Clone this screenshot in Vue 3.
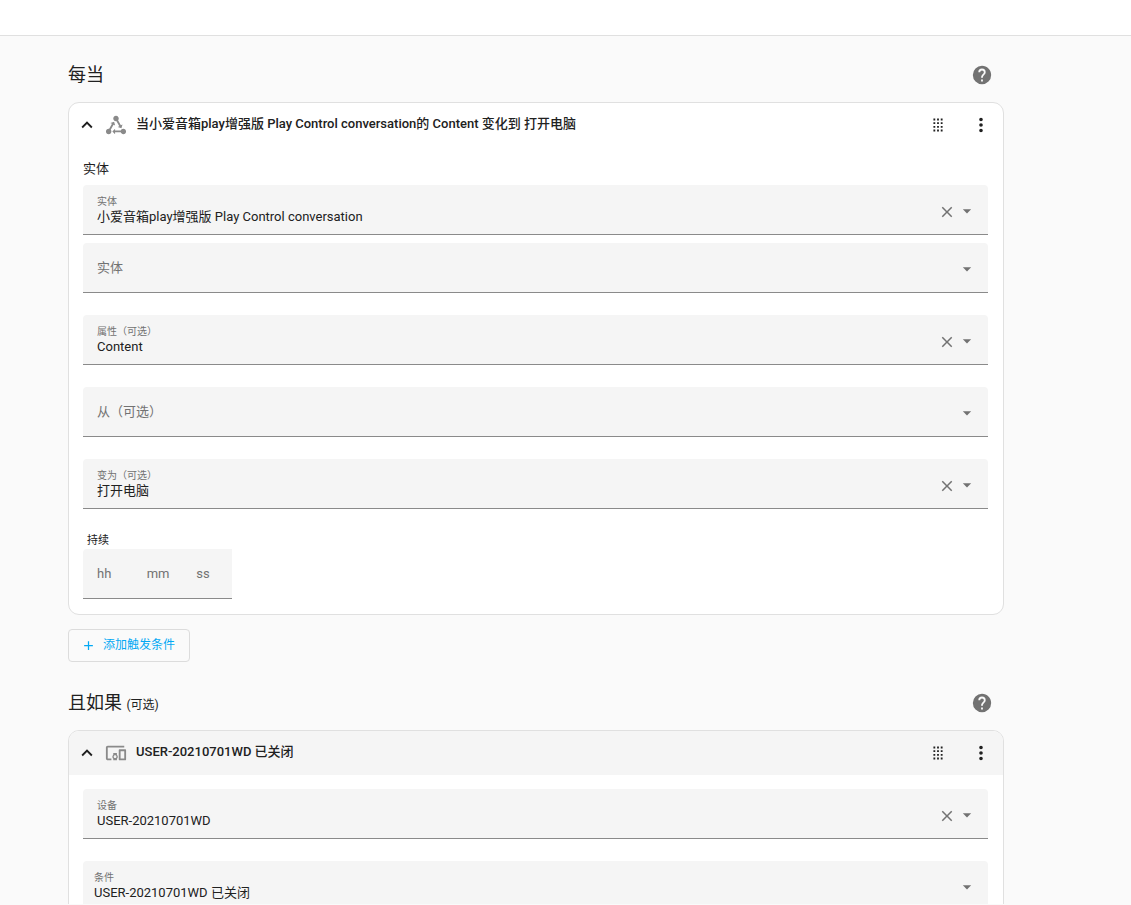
<script setup>
import { reactive } from 'vue'

const icons = {
  up: 'M7.41,15.41L12,10.83L16.59,15.41L18,14L12,8L6,14L7.41,15.41Z',
  state:
    'M6.27 17.05C6.72 17.58 7 18.25 7 19C7 20.66 5.66 22 4 22S1 20.66 1 19 2.34 16 4 16C4.18 16 4.36 16 4.53 16.05L7.6 10.69L5.86 9.7L9.95 8.58L11.07 12.67L9.33 11.68L6.27 17.05M20 16C18.7 16 17.6 16.84 17.18 18H11V16L8 19L11 22V20H17.18C17.6 21.16 18.7 22 20 22C21.66 22 23 20.66 23 19S21.66 16 20 16M12 8C12.18 8 12.36 8 12.53 7.95L15.6 13.31L13.86 14.3L17.95 15.42L19.07 11.33L17.33 12.32L14.27 6.95C14.72 6.42 15 5.75 15 5C15 3.34 13.66 2 12 2S9 3.34 9 5 10.34 8 12 8Z',
  devices:
    'M3 6H21V4H3C1.9 4 1 4.9 1 6V18C1 19.1 1.9 20 3 20H7V18H3V6M13 12H9V13.78C8.39 14.33 8 15.11 8 16C8 16.89 8.39 17.67 9 18.22V20H13V18.22C13.61 17.67 14 16.88 14 16S13.61 14.33 13 13.78V12M11 17.5C10.17 17.5 9.5 16.83 9.5 16S10.17 14.5 11 14.5 12.5 15.17 12.5 16 11.83 17.5 11 17.5M22 8H16C15.5 8 15 8.5 15 9V19C15 19.5 15.5 20 16 20H22C22.5 20 23 19.5 23 19V9C23 8.5 22.5 8 22 8M21 18H17V10H21V18Z',
  help: 'M15.07,11.25L14.17,12.17C13.45,12.89 13,13.5 13,15H11V14.5C11,13.39 11.45,12.39 12.17,11.67L13.41,10.41C13.78,10.05 14,9.55 14,9C14,7.89 13.1,7 12,7A2,2 0 0,0 10,9H8A4,4 0 0,1 12,5A4,4 0 0,1 16,9C16,9.88 15.64,10.67 15.07,11.25M13,19H11V17H13M12,2A10,10 0 0,0 2,12A10,10 0 0,0 12,22A10,10 0 0,0 22,12C22,6.47 17.5,2 12,2Z',
  grid: [6, 10, 14, 18].map((y) => [8, 12, 16].map((x) => `M${x - 1},${y - 1}h2v2h-2z`).join('')).join(''),
  dots: 'M12,16A2,2 0 0,1 14,18A2,2 0 0,1 12,20A2,2 0 0,1 10,18A2,2 0 0,1 12,16M12,10A2,2 0 0,1 14,12A2,2 0 0,1 12,14A2,2 0 0,1 10,12A2,2 0 0,1 12,10M12,4A2,2 0 0,1 14,6A2,2 0 0,1 12,8A2,2 0 0,1 10,6A2,2 0 0,1 12,4Z',
  close:
    'M19,6.41L17.59,5L12,10.59L6.41,5L5,6.41L10.59,12L5,17.59L6.41,19L12,13.41L17.59,19L19,17.59L13.41,12L19,6.41Z',
  down: 'M7,10L12,15L17,10H7Z',
  plus: 'M19,13H13V19H11V13H5V11H11V5H13V11H19V13Z',
}

const sections = reactive([
  {
    id: 'trigger',
    title: '每当',
    optional: '',
    icon: 'state',
    name: '当小爱音箱play增强版 Play Control conversation的 Content 变化到 打开电脑',
    legend: '实体',
    fields: [
      { id: 'entity', label: '实体', value: '小爱音箱play增强版 Play Control conversation', tight: true },
      { id: 'entity-new', label: '实体', value: '' },
      { id: 'attribute', label: '属性（可选）', value: 'Content' },
      { id: 'from', label: '从（可选）', value: '' },
      { id: 'to', label: '变为（可选）', value: '打开电脑' },
    ],
    duration: [
      { unit: 'hh', value: '' },
      { unit: 'mm', value: '' },
      { unit: 'ss', value: '' },
    ],
    add: '添加触发条件',
  },
  {
    id: 'condition',
    title: '且如果',
    optional: '(可选)',
    icon: 'devices',
    name: 'USER-20210701WD 已关闭',
    shaded: true,
    fields: [
      { id: 'device', label: '设备', value: 'USER-20210701WD' },
      { id: 'type', label: '条件', value: 'USER-20210701WD 已关闭', options: ['USER-20210701WD 已关闭'] },
    ],
  },
])
</script>

<template>
  <div class="page">
    <header class="topbar"></header>
    <main class="content">
      <section v-for="s in sections" :key="s.id" class="section">
        <div class="heading">
          <h2>{{ s.title }} <small v-if="s.optional">{{ s.optional }}</small></h2>
          <a href="#" class="help" aria-label="帮助">
            <svg class="icon" viewBox="0 0 24 24"><path :d="icons.help" /></svg>
          </a>
        </div>

        <article class="card">
          <div class="card-head" :class="{ shaded: s.shaded }">
            <button type="button" class="icon-btn" aria-label="折叠">
              <svg class="icon" viewBox="0 0 24 24"><path :d="icons.up" /></svg>
            </button>
            <svg class="icon kind" viewBox="0 0 24 24"><path :d="icons[s.icon]" /></svg>
            <h3>{{ s.name }}</h3>
            <button type="button" class="icon-btn drag" aria-label="移动">
              <svg class="icon" viewBox="0 0 24 24"><path :d="icons.grid" /></svg>
            </button>
            <button type="button" class="icon-btn" aria-label="菜单">
              <svg class="icon" viewBox="0 0 24 24"><path :d="icons.dots" /></svg>
            </button>
          </div>

          <div class="card-body">
            <div v-if="s.legend" class="legend">{{ s.legend }}</div>
            <div
              v-for="f in s.fields"
              :key="f.id"
              class="field"
              :class="{ tight: f.tight, select: f.options }"
            >
              <div class="text">
                <label v-if="f.value" :for="f.id">{{ f.label }}</label>
                <select v-if="f.options" :id="f.id" v-model="f.value">
                  <option v-for="o in f.options" :key="o">{{ o }}</option>
                </select>
                <input
                  v-else
                  :id="f.id"
                  v-model="f.value"
                  type="text"
                  :placeholder="f.label"
                  :aria-label="f.label"
                />
              </div>
              <button
                v-if="f.value && !f.options"
                type="button"
                class="icon-btn"
                aria-label="清除"
                @click="f.value = ''"
              >
                <svg class="close" viewBox="0 0 24 24"><path :d="icons.close" /></svg>
              </button>
              <svg class="arrow" viewBox="0 0 24 24"><path :d="icons.down" /></svg>
            </div>

            <template v-if="s.duration">
              <div id="duration-label" class="duration-label">持续</div>
              <div class="duration" role="group" aria-labelledby="duration-label">
                <input
                  v-for="d in s.duration"
                  :key="d.unit"
                  v-model="d.value"
                  type="text"
                  :placeholder="d.unit"
                  :aria-label="d.unit"
                />
              </div>
            </template>
          </div>
        </article>

        <button v-if="s.add" type="button" class="add">
          <svg class="plus" viewBox="0 0 24 24"><path :d="icons.plus" /></svg>
          {{ s.add }}
        </button>
      </section>
    </main>
  </div>
</template>

<style>
body {
  background: #fafafa;
}
</style>

<style scoped>
.page {
  box-sizing: border-box;
  height: 100vh;
  display: flex;
  flex-direction: column;
  overflow: hidden;
  border-bottom: 1px solid #fafafa;
  background: #fafafa;
  color: #212121;
  font-family: Roboto, 'Noto Sans CJK SC', sans-serif;
  font-size: 13px;
}
.topbar {
  flex: none;
  height: 35px;
  background: #fff;
  border-bottom: 1px solid #e0e0e0;
}
.content {
  flex: 1;
  min-height: 0;
  overflow: hidden;
  padding: 19px 127px 0 68px;
}
.section {
  margin-bottom: 21px;
}
.heading {
  display: flex;
  align-items: center;
  justify-content: space-between;
  height: 40px;
  margin-bottom: 7px;
  padding-right: 11px;
}
h2,
h3 {
  margin: 0;
}
h2 {
  font-size: 18px;
  font-weight: 400;
  line-height: 24px;
}
small {
  font-size: 12px;
  line-height: 12px;
}
.help {
  display: flex;
  color: #727272;
}
.icon {
  display: block;
  width: 22px;
  height: 22px;
  fill: currentColor;
}
.icon-btn {
  flex: none;
  padding: 0;
  border: 0;
  background: none;
  color: inherit;
  cursor: pointer;
}
.card {
  border: 1px solid #e0e0e0;
  border-radius: 11px;
  background: #fff;
  overflow: hidden;
}
.card-head {
  display: flex;
  align-items: center;
  height: 44px;
  padding: 0 11px 0 7px;
}
.shaded {
  background: #f5f5f5;
}
.kind {
  flex: none;
  margin: 0 9px 0 7px;
  color: #8a8a8a;
}
h3 {
  flex: 1;
  min-width: 0;
  font-size: 13px;
  font-weight: 500;
  line-height: 20px;
  padding-bottom: 2px;
}
.drag {
  margin-right: 21px;
}
.card-body {
  padding: 14px 15px 15px 14px;
}
.legend {
  line-height: 16px;
  margin-bottom: 8px;
}
.field {
  display: flex;
  align-items: center;
  box-sizing: border-box;
  height: 50px;
  padding: 0 11px 0 14px;
  border-bottom: 1px solid #8a8a8a;
  border-radius: 4px 4px 0 0;
  background: #f5f5f5;
  color: #727272;
}
.field + .field {
  margin-top: 22px;
}
.field.tight + .field {
  margin-top: 8px;
}
.field.select {
  padding-left: 11px;
}
.text {
  flex: 1;
  min-width: 0;
  display: flex;
  flex-direction: column;
}
label {
  font-size: 10px;
  line-height: 14px;
}
input,
select {
  width: 100%;
  height: 16px;
  padding: 0;
  border: 0;
  outline: 0;
  appearance: none;
  background: none;
  color: #212121;
  font: inherit;
  font-size: 13px;
  line-height: 16px;
}
input::placeholder {
  color: #727272;
  opacity: 1;
}
.close {
  display: block;
  width: 18px;
  height: 18px;
  margin-top: 4px;
  fill: currentColor;
}
.arrow {
  flex: none;
  width: 20px;
  height: 20px;
  margin: 2px 0 0 1px;
  fill: currentColor;
}
.duration-label {
  margin: 24px 0 0 4px;
  font-size: 11px;
  line-height: 16px;
}
.duration {
  display: flex;
  width: 149px;
}
.duration input {
  flex: 1;
  min-width: 0;
  box-sizing: border-box;
  height: 50px;
  padding: 0 0 0 14px;
  border-bottom: 1px solid #8a8a8a;
  background: #f5f5f5;
}
.duration input:first-child {
  border-radius: 4px 0 0 0;
}
.add {
  display: flex;
  align-items: center;
  gap: 7px;
  height: 33px;
  margin-top: 14px;
  padding: 0 14px 4px 12px;
  border: 1px solid #dcdcdc;
  border-radius: 4px;
  background: none;
  color: #03a9f4;
  font: inherit;
  font-size: 12px;
  cursor: pointer;
}
.plus {
  width: 15px;
  height: 15px;
  margin-top: 3px;
  fill: currentColor;
}
</style>
